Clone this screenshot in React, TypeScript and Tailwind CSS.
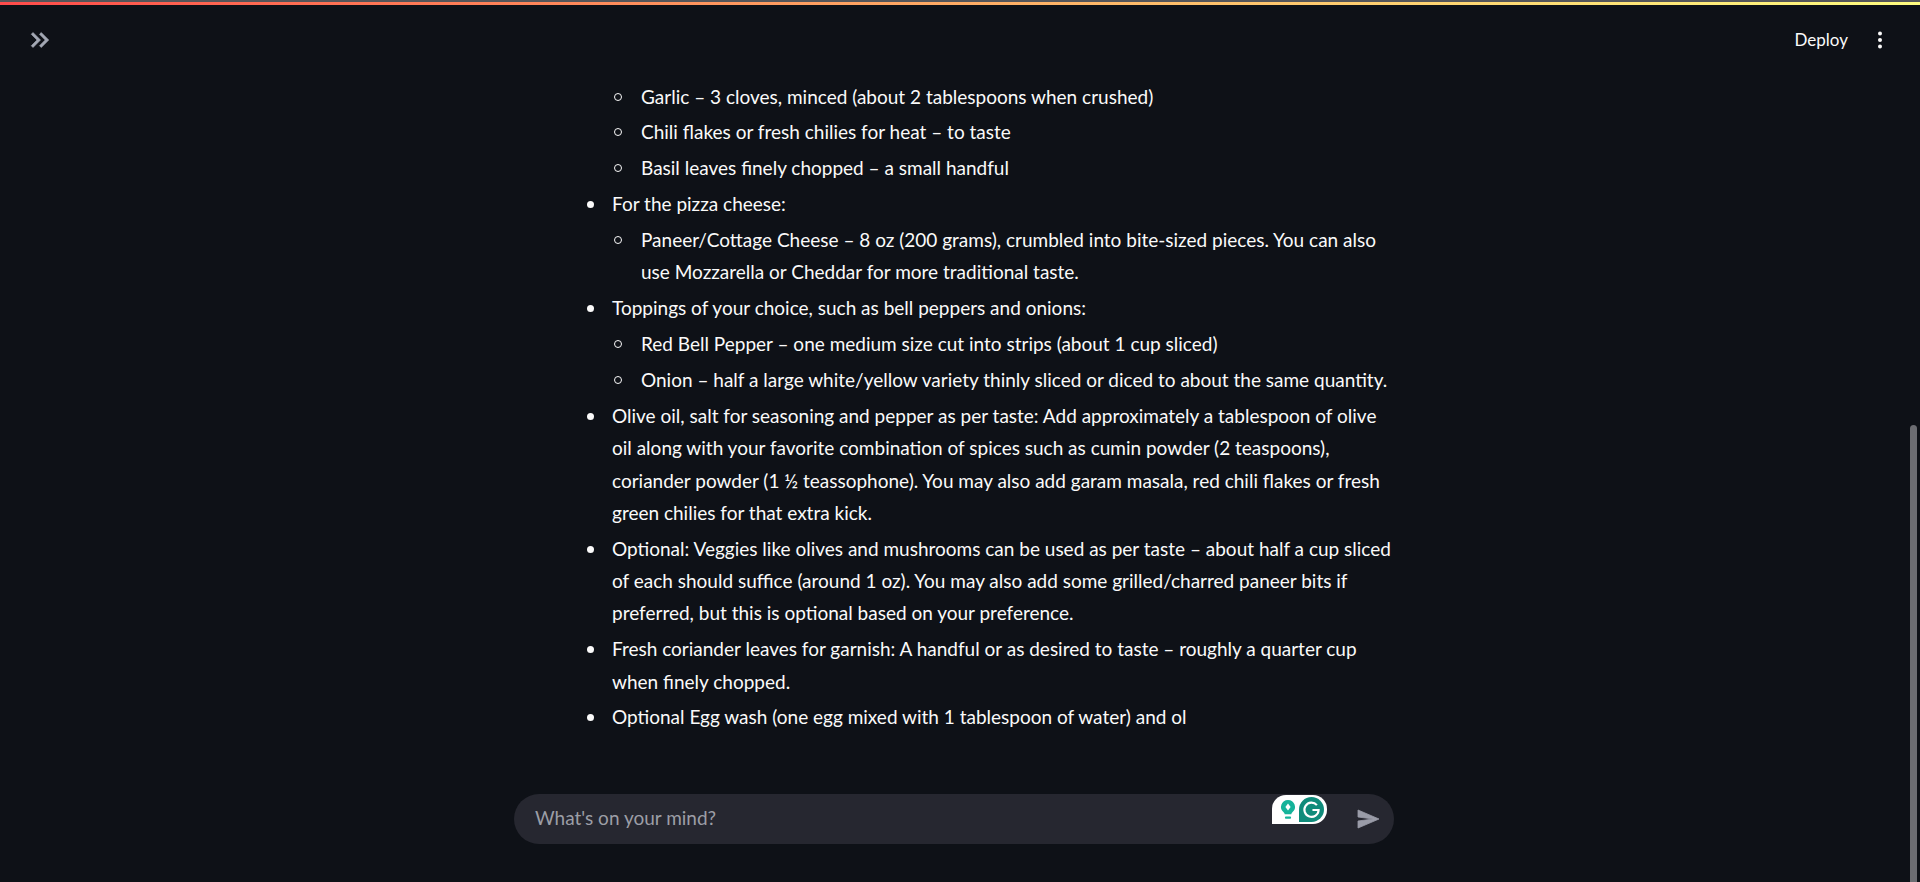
const sans = "font-['Lato',sans-serif]";
const bullet =
  "relative mt-[3.6px] before:absolute before:-left-[25px] before:top-[13px] before:h-[7px] before:w-[7px] before:rounded-full before:bg-[#fafafa]";
const circle =
  "relative mt-[3.6px] before:absolute before:-left-[27px] before:top-[12px] before:h-[8px] before:w-[8px] before:rounded-full before:border before:border-[#fafafa]";

function SubList({ items }: { items: string[] }) {
  return (
    <ul className="list-none pl-[29px]">
      {items.map((item) => (
        <li key={item} className={circle}>
          {item}
        </li>
      ))}
    </ul>
  );
}

function DoubleArrow() {
  return (
    <svg
      viewBox="0 0 24 24"
      className="h-[30px] w-[30px] fill-[#a3a8b4] stroke-[#a3a8b4] stroke-[0.5]"
    >
      <path d="M6.41 6L5 7.41 9.58 12 5 16.59 6.41 18l6-6z" />
      <path d="M13 6l-1.41 1.41L16.17 12l-4.58 4.59L13 18l6-6z" />
    </svg>
  );
}

function MoreVert() {
  return (
    <svg viewBox="0 0 6 18" className="h-[18px] w-[6px] fill-[#fafafa]">
      <circle cx="3" cy="2.5" r="2" />
      <circle cx="3" cy="9" r="2" />
      <circle cx="3" cy="15.5" r="2" />
    </svg>
  );
}

function SendIcon() {
  return (
    <svg
      viewBox="0 0 24 24"
      className="h-6 w-6 fill-[#9a9ca8] stroke-[#9a9ca8] stroke-[0.8]"
    >
      <path d="M2.01 21L23 12 2.01 3 2 10l15 2-15 2z" />
    </svg>
  );
}

function GrammarlyBadge() {
  return (
    <div className="absolute left-[758px] top-[1px] flex h-[29px] w-[55px] items-center justify-between rounded-tl-[14px] rounded-tr-[14px] rounded-br-[14px] bg-white pl-[7px] pr-[3px]">
      <svg viewBox="0 0 20 24" className="h-[21px] w-[18px]">
        <path
          d="M10 1a8 8 0 0 0-5 14.2c.8.7 1.2 1.3 1.2 2.3h7.6c0-1 .4-1.6 1.2-2.3A8 8 0 0 0 10 1z"
          fill="#15b39a"
        />
        <path d="M10 5l3 4-3 4-3-4z" fill="#fff" />
        <rect x="6.5" y="20" width="7" height="2.5" rx="1" fill="#15b39a" />
      </svg>
      <svg viewBox="0 0 26 26" className="h-[25px] w-[25px]">
        <path d="M13 0a13 13 0 0 1 0 26H0V13A13 13 0 0 1 13 0z" fill="#0f8b7a" />
        <path
          d="M18.6 8.4A7.4 7.4 0 1 0 20.4 13.5H14"
          fill="none"
          stroke="#fff"
          strokeWidth="2.2"
        />
      </svg>
    </div>
  );
}

export default function App() {
  return (
    <div
      className={`relative flex h-screen flex-col overflow-hidden bg-[#0e1117] text-[19px] leading-[32.3px] text-[#fafafa] ${sans}`}
    >
      <div className="h-[2px] bg-[#55565a]" />
      <div className="h-[3px] bg-gradient-to-r from-[#ff4b4b] to-[#fffd80]" />

      <header className="flex h-[70px] shrink-0 items-center justify-between pl-[25px] pr-[37px]">
        <DoubleArrow />
        <div className="flex items-center gap-[29px]">
          <span className="text-[17px]">Deploy</span>
          <MoreVert />
        </div>
      </header>

      <main className="min-h-0 flex-1 pr-[12px]">
        <div className="mx-auto w-[880px]">
          <ul className="list-none pl-[98px] pt-[2px]">
            <li>
              <SubList
                items={[
                  "Garlic – 3 cloves, minced (about 2 tablespoons when crushed)",
                  "Chili flakes or fresh chilies for heat – to taste",
                  "Basil leaves finely chopped – a small handful",
                ]}
              />
            </li>
            <li className={bullet}>
              For the pizza cheese:
              <SubList
                items={[
                  "Paneer/Cottage Cheese – 8 oz (200 grams), crumbled into bite-sized pieces. You can also use Mozzarella or Cheddar for more traditional taste.",
                ]}
              />
            </li>
            <li className={bullet}>
              Toppings of your choice, such as bell peppers and onions:
              <SubList
                items={[
                  "Red Bell Pepper – one medium size cut into strips (about 1 cup sliced)",
                  "Onion – half a large white/yellow variety thinly sliced or diced to about the same quantity.",
                ]}
              />
            </li>
            <li className={bullet}>
              Olive oil, salt for seasoning and pepper as per taste: Add
              approximately a tablespoon of olive oil along with your favorite
              combination of spices such as cumin powder (2 teaspoons), coriander
              powder (1 ½ teassophone). You may also add garam masala, red chili
              flakes or fresh green chilies for that extra kick.
            </li>
            <li className={bullet}>
              Optional: Veggies like olives and mushrooms can be used as per
              taste – about half a cup sliced of each should suffice (around 1
              oz). You may also add some grilled/charred paneer bits if
              preferred, but this is optional based on your preference.
            </li>
            <li className={bullet}>
              Fresh coriander leaves for garnish: A handful or as desired to
              taste – roughly a quarter cup when finely chopped.
            </li>
            <li className={bullet}>
              Optional Egg wash (one egg mixed with 1 tablespoon of water) and ol
            </li>
          </ul>
        </div>
      </main>

      <footer className="flex h-[88px] shrink-0 justify-center pr-[12px]">
        <div className="relative flex h-[50px] w-[880px] items-center justify-between rounded-[25px] bg-[#262730] pl-[21px] pr-[14px]">
          <span className="pb-[2px] text-[19px] text-[#9c9ea6]">What's on your mind?</span>
          <GrammarlyBadge />
          <SendIcon />
        </div>
      </footer>

      <div className="absolute bottom-0 right-[3px] top-[425px] w-[7px] rounded-t-full bg-[#6c6d72]" />
    </div>
  );
}
